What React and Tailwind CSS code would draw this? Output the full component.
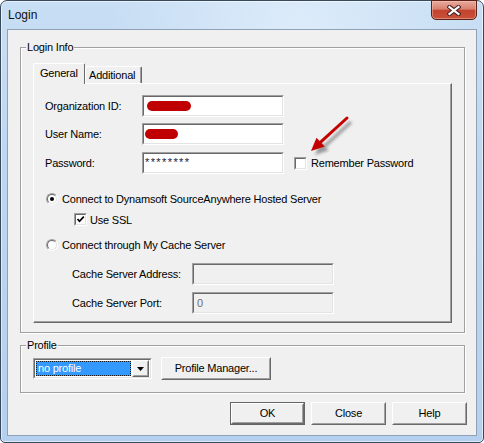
import React from 'react';

// classic 3D edges
const Sunken = ({ className = '', inner = 'bg-white', children }) => (
  <div className={`border border-t-[#a0a0a0] border-l-[#a0a0a0] border-r-white border-b-white ${className}`}>
    <div className={`flex h-full w-full items-center border border-t-[#696969] border-l-[#696969] border-r-[#e3e3e3] border-b-[#e3e3e3] ${inner}`}>
      {children}
    </div>
  </div>
);

const Raised = ({ className = '', children }) => (
  <div className={`border border-t-white border-l-white border-r-[#696969] border-b-[#696969] bg-[#f0f0f0] ${className}`}>
    <div className="flex h-full w-full items-center justify-center border border-t-[#f0f0f0] border-l-[#f0f0f0] border-r-[#a0a0a0] border-b-[#a0a0a0]">
      {children}
    </div>
  </div>
);

const Radio = ({ checked }) => (
  <div className="flex h-[12px] w-[12px] items-center justify-center rounded-full border border-t-[#a0a0a0] border-l-[#a0a0a0] border-r-white border-b-white">
    <div className="flex h-[10px] w-[10px] items-center justify-center rounded-full border border-t-[#696969] border-l-[#696969] border-r-[#e3e3e3] border-b-[#e3e3e3] bg-white">
      {checked && <div className="h-[4px] w-[4px] rounded-full bg-black" />}
    </div>
  </div>
);

const Check = ({ checked }) => (
  <div className="h-[13px] w-[13px] border border-t-[#a0a0a0] border-l-[#a0a0a0] border-r-white border-b-white">
    <div className="flex h-full w-full items-center justify-center border border-t-[#696969] border-l-[#696969] border-r-[#e3e3e3] border-b-[#e3e3e3] bg-white">
      {checked && (
        <svg width="9" height="9" viewBox="0 0 9 9">
          <path d="M1.5 4 L3.5 6.3 L7.8 1.6" fill="none" stroke="#000" strokeWidth="1.7" />
        </svg>
      )}
    </div>
  </div>
);

const GroupBox = ({ label, className = '', children }) => (
  <div className={`relative ml-[12px] w-[445px] border border-[#a0a0a0] shadow-[inset_1px_1px_0_#fff,1px_1px_0_#fff] ${className}`}>
    <span className="absolute top-[-7px] left-[5px] bg-[#f0f0f0] px-[1px] leading-[13px]">{label}</span>
    {children}
  </div>
);

export default function App() {
  return (
    <div className="h-[443px] w-[484px] bg-white font-['Liberation_Sans',Arial,sans-serif] text-[11px] leading-[13px] tracking-[-0.2px] text-black">
      <div className="flex h-[443px] w-[484px] flex-col rounded-t-[7px] rounded-b-[5px] border border-[#37495b] bg-[radial-gradient(ellipse_at_62%_10%,#ddecfa_0%,transparent_45%),linear-gradient(180deg,#c8def4_0%,#bdd6f0_40%,#b5d0ee_100%)] shadow-[inset_0_0_0_1px_rgba(255,255,255,0.55)]">
        {/* title bar */}
        <div className="flex h-[28px] items-start">
          <span className="ml-[7px] mt-[7px] text-[12px] leading-[15px] tracking-normal text-[#111]">Login</span>
          <div className="ml-auto mr-[6px] -mt-px flex h-[20px] w-[46px] items-center justify-center rounded-b-[5px] border border-[#5b2219] bg-[linear-gradient(180deg,#e8ab9d_0%,#d9806f_45%,#c3432f_52%,#c9513a_100%)] shadow-[inset_0_0_0_1px_rgba(255,200,190,0.45)]">
            <svg width="14" height="11" viewBox="0 0 14 11">
              <path d="M2.5 2 L11.5 9 M11.5 2 L2.5 9" stroke="#4a2420" strokeWidth="4.2" strokeLinecap="square" />
              <path d="M2.5 2 L11.5 9 M11.5 2 L2.5 9" stroke="#fff" strokeWidth="2.2" strokeLinecap="square" />
            </svg>
          </div>
        </div>

        {/* client area */}
        <div className="ml-[6px] flex h-[407px] w-[470px] flex-col border border-[#8fa1b5] bg-[#f0f0f0]">
          <GroupBox label="Login Info" className="mt-[17px] h-[286px]">
            {/* tabs */}
            <div className="ml-[12px] mt-[15px] flex h-[20px] items-end">
              <div className="relative z-10 -mb-px h-[21px] w-[52px] rounded-t-[2px] border-l border-t border-r border-l-white border-t-white border-r-[#696969] bg-[#f0f0f0] pl-[6px] pt-[3px]">
                General
              </div>
              <div className="h-[17px] w-[57px] rounded-t-[2px] border-l border-t border-r border-l-white border-t-white border-r-[#696969] pl-[3px] pt-[2px] shadow-[inset_-1px_0_0_#a0a0a0]">
                Additional
              </div>
            </div>

            {/* panel */}
            <div className="relative ml-[12px] h-[240px] w-[419px] border border-t-white border-l-white border-r-[#696969] border-b-[#696969] shadow-[inset_-1px_-1px_0_#a0a0a0]">
              <div className="flex flex-col pl-[11px] pt-[11px]">
                <div className="flex h-[22px] items-center">
                  <span className="w-[97px] pt-px">Organization ID:</span>
                  <Sunken className="h-[22px] w-[142px]">
                    <div className="ml-[3px] h-[10px] w-[44px] rounded-full bg-[#c00000]" />
                  </Sunken>
                </div>
                <div className="mt-[6px] flex h-[22px] items-center">
                  <span className="w-[97px] pt-px">User Name:</span>
                  <Sunken className="h-[22px] w-[142px]">
                    <div className="ml-[1px] h-[10px] w-[33px] rounded-full bg-[#c00000]" />
                  </Sunken>
                </div>
                <div className="mt-[7px] flex h-[22px] items-center">
                  <span className="w-[97px] pt-px">Password:</span>
                  <Sunken className="h-[22px] w-[142px]" inner="bg-white items-start">
                    <span className="ml-[1px] mt-[2px] text-[11px] tracking-[1.4px] text-[#1a1a3a]">********</span>
                  </Sunken>
                  <div className="ml-[10px]">
                    <Check />
                  </div>
                  <span className="ml-[4px] pt-px">Remember Password</span>
                </div>
              </div>

              <div className="mt-[18px] flex h-[13px] items-center pl-[12px]">
                <Radio checked />
                <span className="ml-[4px] pt-px">Connect to Dynamsoft SourceAnywhere Hosted Server</span>
              </div>
              <div className="mt-[8px] flex h-[13px] items-center pl-[40px]">
                <Check checked />
                <span className="ml-[3px] pt-px">Use SSL</span>
              </div>
              <div className="mt-[12px] flex h-[13px] items-center pl-[12px]">
                <Radio />
                <span className="ml-[4px] pt-px">Connect through My Cache Server</span>
              </div>
              <div className="mt-[12px] flex h-[22px] items-center pl-[38px]">
                <span className="w-[120px] pt-px">Cache Server Address:</span>
                <Sunken className="h-[22px] w-[142px]" inner="bg-[#f0f0f0]" />
              </div>
              <div className="mt-[7px] flex h-[22px] items-center pl-[38px]">
                <span className="w-[120px] pt-px">Cache Server Port:</span>
                <Sunken className="h-[22px] w-[142px]" inner="bg-[#f0f0f0]">
                  <span className="ml-[3px] text-[#6d6d6d]">0</span>
                </Sunken>
              </div>

              {/* red arrow callout */}
              <svg className="absolute left-[268px] top-[28px]" width="90" height="52" viewBox="0 0 90 52">
                <defs>
                  <filter id="blur" x="-20%" y="-20%" width="140%" height="140%">
                    <feGaussianBlur stdDeviation="1.8" />
                  </filter>
                </defs>
                <g transform="translate(4 4)" filter="url(#blur)" opacity="0.55">
                  <path d="M45 6 L18.6 30.2" stroke="#555" strokeWidth="3.2" />
                  <path d="M9 39 L22.7 34.6 L14.5 25.8 Z" fill="#555" />
                </g>
                <path d="M45 6 L18.6 30.2" stroke="#c40000" strokeWidth="3" strokeLinecap="round" />
                <path d="M9 39 L22.7 34.6 L14.5 25.8 Z" fill="#c40000" />
              </svg>
            </div>
          </GroupBox>

          <GroupBox label="Profile" className="mt-[12px] h-[48px]">
            <div className="flex items-start">
              <Sunken className="ml-[12px] mt-[12px] h-[21px] w-[119px]">
                <div className="ml-px flex h-[15px] flex-1 items-center border border-dotted border-[#1a1a1a] bg-[#3399ff] pl-[1px] text-white">
                  no profile
                </div>
                <Raised className="mx-px h-[17px] w-[17px]">
                  <svg width="7" height="4" viewBox="0 0 7 4">
                    <path d="M0 0 L7 0 L3.5 4 Z" fill="#000" />
                  </svg>
                </Raised>
              </Sunken>
              <Raised className="ml-[9px] mt-[11px] h-[23px] w-[110px]">Profile Manager...</Raised>
            </div>
          </GroupBox>

          <div className="mt-[9px] flex justify-end gap-[6px] pr-[9px]">
            <div className="h-[23px] w-[75px] border border-[#646464]">
              <Raised className="h-full w-full">OK</Raised>
            </div>
            <Raised className="h-[23px] w-[75px]">Close</Raised>
            <Raised className="h-[23px] w-[75px]">Help</Raised>
          </div>
        </div>
      </div>
    </div>
  );
}
